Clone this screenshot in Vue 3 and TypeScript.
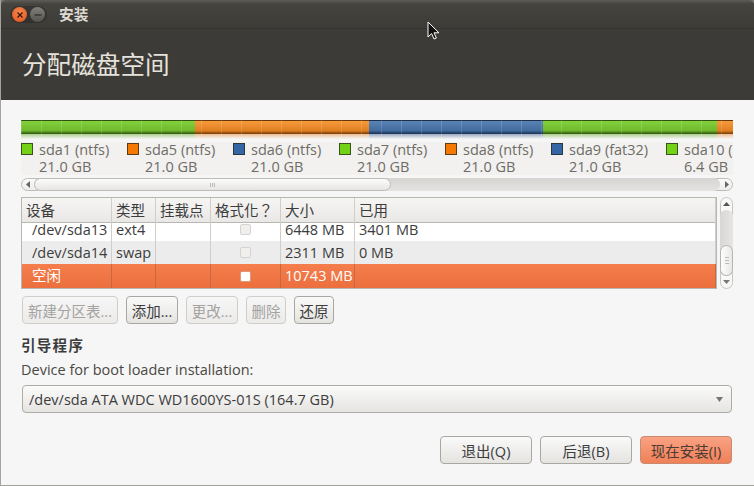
<script setup lang="ts">
const legend = [
  { name: 'sda1 (ntfs)', size: '21.0 GB', c: '#73d216' },
  { name: 'sda5 (ntfs)', size: '21.0 GB', c: '#f57900' },
  { name: 'sda6 (ntfs)', size: '21.0 GB', c: '#3465a4' },
  { name: 'sda7 (ntfs)', size: '21.0 GB', c: '#73d216' },
  { name: 'sda8 (ntfs)', size: '21.0 GB', c: '#f57900' },
  { name: 'sda9 (fat32)', size: '21.0 GB', c: '#3465a4' },
  { name: 'sda10 (ext4)', size: '6.4 GB', c: '#73d216' },
]
const segments = [
  { w: 174, cls: 'green' },
  { w: 174, cls: 'orange' },
  { w: 174, cls: 'blue' },
  { w: 174, cls: 'green' },
  { w: 16, cls: 'orange' },
]
const cols = ['设备', '类型', '挂载点', '格式化？', '大小', '已用']
const rows = [
  { cls: 'r1', dev: '/dev/sda13', type: 'ext4', size: '6448 MB', used: '3401 MB' },
  { cls: 'r2', dev: '/dev/sda14', type: 'swap', size: '2311 MB', used: '0 MB' },
  { cls: 'r3', dev: '空闲', type: '', size: '10743 MB', used: '' },
]
const tools = [
  { t: '新建分区表...', w: 96, off: true },
  { t: '添加...', w: 52, off: false },
  { t: '更改...', w: 52, off: true },
  { t: '删除', w: 40, off: true },
  { t: '还原', w: 40, off: false },
]
</script>

<template>
  <div class="win">
    <div class="titlebar">
      <div class="wbtns">
        <span class="wb close"><svg width="8" height="8" viewBox="0 0 8 8"><path d="M1.5 1.5l5 5M6.5 1.5l-5 5" stroke="#3a1505" stroke-width="1.3" /></svg></span>
        <span class="wb min"><svg width="8" height="8" viewBox="0 0 8 8"><path d="M.5 4h7" stroke="#2f2e2b" stroke-width="1.3" /></svg></span>
      </div>
      <span class="wtitle">安装</span>
    </div>
    <div class="header">分配磁盘空间</div>
    <div class="body">
      <div class="bar">
        <div v-for="(s, i) in segments" :key="i" class="seg" :class="s.cls" :style="{ width: s.w + 'px' }"></div>
      </div>
      <div class="legend">
        <div v-for="l in legend" :key="l.name" class="lg">
          <span class="sw" :style="{ background: l.c }"></span>
          <div class="lgt">
            <div>{{ l.name }}</div>
            <div>{{ l.size }}</div>
          </div>
        </div>
      </div>
      <div class="hscroll">
        <span class="harrow"><svg width="5" height="7" viewBox="0 0 5 7"><path d="M4 0v7L0 3.5z" fill="#666" /></svg></span>
        <div class="htrack">
          <div class="hthumb"><i></i><i></i><i></i></div>
        </div>
        <span class="harrow"><svg width="5" height="7" viewBox="0 0 5 7"><path d="M1 0v7l4-3.5z" fill="#666" /></svg></span>
      </div>
      <div class="tablewrap">
        <div class="table">
          <div class="thead">
            <div v-for="c in cols" :key="c" class="th">{{ c }}</div>
          </div>
          <div v-for="r in rows" :key="r.dev" class="tr" :class="r.cls">
            <div class="td dev">{{ r.dev }}</div>
            <div class="td">{{ r.type }}</div>
            <div class="td"></div>
            <div class="td chk"><span class="cb"></span></div>
            <div class="td">{{ r.size }}</div>
            <div class="td">{{ r.used }}</div>
          </div>
        </div>
        <div class="vscroll">
          <svg class="va" width="7" height="4" viewBox="0 0 7 4"><path d="M0 4h7L3.5 0z" fill="#555" /></svg>
          <div class="vtrack">
            <div class="vthumb"><i></i><i></i><i></i></div>
          </div>
          <svg class="va" width="7" height="4" viewBox="0 0 7 4"><path d="M0 0h7L3.5 4z" fill="#777" /></svg>
        </div>
      </div>
      <div class="tools">
        <button v-for="b in tools" :key="b.t" class="btn" :class="{ off: b.off }" :style="{ width: b.w + 'px' }">{{ b.t }}</button>
      </div>
      <div class="sect">引导程序</div>
      <div class="lbl">Device for boot loader installation:</div>
      <div class="combo">
        <span>/dev/sda ATA WDC WD1600YS-01S (164.7 GB)</span>
        <svg width="7" height="5" viewBox="0 0 7 5"><path d="M0 0h7L3.5 5z" fill="#77756f" /></svg>
      </div>
      <div class="actions">
        <button class="btn act">退出(Q)</button>
        <button class="btn act">后退(B)</button>
        <button class="btn act go">现在安装(I)</button>
      </div>
    </div>
    <svg class="cursor" width="14" height="20" viewBox="0 0 14 20"><path d="M1 1v15l3.6-3.4L7 18l2.4-1-2.4-5.2h5z" fill="#111" stroke="#fff" stroke-width="1" /></svg>
  </div>
</template>

<style>
html, body { margin: 0; padding: 0; background: #f5f5f5; }
</style>

<style scoped>
.win {
  position: relative;
  width: 754px;
  height: 486px;
  box-sizing: border-box;
  overflow: hidden;
  background: linear-gradient(#77756f 0 6px, #f6f6f6 6px);
  border-left: 1px solid #a5a39e;
  border-bottom: 1px solid #a5a39e;
  font-family: "Open Sans", "Noto Sans CJK SC", sans-serif;
  color: #3c3c3c;
  font-size: 14.5px;
}
.titlebar {
  height: 29px;
  box-sizing: border-box;
  display: flex;
  align-items: center;
  background: linear-gradient(#5e5c56, #45443f 4px, #3c3b37);
  border-bottom: 1px solid #35342f;
  border-top-left-radius: 5px;
  border-top-right-radius: 5px;
  padding: 0 0 0 9px;
}
.wbtns {
  display: flex;
  gap: 3px;
  margin-top: 1px;
  padding: 1px 2px;
  border-radius: 9px;
  background: rgba(30, 30, 28, .35);
}
.wb {
  width: 15px;
  height: 15px;
  border-radius: 50%;
  display: flex;
  align-items: center;
  justify-content: center;
}
.close { background: radial-gradient(circle at 50% 35%, #f58a50, #e0501a); }
.min { background: linear-gradient(#82807a, #55534e); }
.wtitle {
  margin-left: 12px;
  color: #dfdbd2;
  font-size: 14.67px;
  font-weight: 700;
  line-height: 29px;
}
.header {
  height: 71px;
  box-sizing: border-box;
  background: #3c3b37;
  color: #e6e3dc;
  font-size: 24.6px;
  line-height: 32px;
  padding: 20px 0 0 21px;
}
.body { padding: 20px 21px 0 20px; }
.bar {
  position: relative;
  display: flex;
  height: 14px;
  width: 712px;
}
.bar::after {
  content: "";
  position: absolute;
  left: 0;
  right: 0;
  top: 0;
  height: 18px;
  background-size: 20px 100%;
  background-image: linear-gradient(90deg, rgba(255, 255, 255, .14) 1px, transparent 1px);
}
.seg {
  position: relative;
  height: 14px;
  box-sizing: border-box;
  border-top: 1px solid rgba(0, 0, 0, .2);
}
.seg::after {
  content: "";
  position: absolute;
  left: 0;
  right: 0;
  top: 13px;
  height: 5px;
}
.green { background: linear-gradient(#84d03c, #6fb92c 75%, #4a7d1c 88%, #2f5a10); }
.green::after { background: linear-gradient(rgba(110, 170, 50, .55), rgba(110, 170, 50, 0)); }
.orange { background: linear-gradient(#f79a3c, #e07f22 75%, #a85a12 88%, #6e3a08); }
.orange::after { background: linear-gradient(rgba(225, 130, 50, .5), rgba(225, 130, 50, 0)); }
.blue { background: linear-gradient(#5a82b5, #426b9e 75%, #2a4a74 88%, #1c3250); }
.blue::after { background: linear-gradient(rgba(60, 90, 140, .5), rgba(60, 90, 140, 0)); }
.legend {
  display: flex;
  width: 712px;
  height: 33px;
  margin-top: 8px;
  overflow-x: clip;
  background: #f2f1f0;
}
.lg { flex: 0 0 106px; display: flex; gap: 6px; }
.lg:nth-child(6) { flex-basis: 115px; }
.sw {
  flex: none;
  width: 10px;
  height: 10px;
  margin-top: 1px;
  border: 1px solid rgba(40, 40, 30, .75);
}
.lgt {
  white-space: nowrap;
  font-size: 14.5px;
  line-height: 16.5px;
  color: #6e6c66;
}
.hscroll {
  display: flex;
  align-items: center;
  width: 712px;
  height: 13px;
  margin-top: 3px;
  box-sizing: border-box;
  border: 1px solid #bdbcb7;
  border-radius: 7px;
  background: linear-gradient(#fbfbfa, #eeedeb);
}
.harrow { flex: none; width: 12px; display: flex; justify-content: center; }
.htrack {
  flex: 1;
  height: 13px;
  margin: -1px 0;
  background: linear-gradient(#d6d5d2, #e4e3e1);
  border-radius: 6px;
}
.hthumb {
  width: 357px;
  height: 13px;
  box-sizing: border-box;
  border: 1px solid #bdbcb7;
  border-radius: 7px;
  background: linear-gradient(#fcfcfc, #e6e5e3);
  display: flex;
  justify-content: center;
  align-items: center;
  gap: 1px;
}
.hthumb i { width: 1px; height: 4px; background: #bbb; }
.tablewrap { display: flex; margin-top: 6px; gap: 3px; }
.table {
  width: 696px;
  height: 92px;
  box-sizing: border-box;
  border: 1px solid #b8b7b2;
  overflow: hidden;
}
.thead, .tr {
  display: grid;
  grid-template-columns: 90px 44px 55px 70px 74px 1fr;
}
.thead {
  height: 25px;
  box-sizing: border-box;
  background: linear-gradient(#f6f5f4, #e9e8e6);
  border-bottom: 1px solid #b8b7b2;
}
.th {
  padding-left: 4px;
  line-height: 25px;
  color: #3c3c3c;
  box-sizing: border-box;
  border-right: 1px solid #cfcec9;
  white-space: nowrap;
}
.th:nth-child(4) { font-family: "Open Sans", "Noto Sans CJK TC", sans-serif; }
.tr { height: 23px; }
.r1 { height: 18px; background: #fff; }
.r1 .td { line-height: 14px; }
.r2 { background: #ececec; }
.r3 { height: 24px; background: linear-gradient(#f47e4c, #ec6f3e); color: #fff; }
.r3 .td { line-height: 24px; }
.td {
  box-sizing: border-box;
  padding-left: 4px;
  border-right: 1px solid #cfcec9;
  line-height: 23px;
  white-space: nowrap;
}
.r3 .td { border-right-color: #c9673f; }
.dev { padding-left: 10px; }
.chk { display: flex; align-items: center; justify-content: center; padding-left: 0; }
.cb {
  width: 9px;
  height: 9px;
  border: 1px solid #d4d3cf;
  border-radius: 2px;
  background: #f0efed;
}
.r1 .chk { align-items: flex-start; padding-top: 1px; }
.r3 .cb { background: #fff; border-color: #dc9a7c; }
.vscroll {
  width: 13px;
  height: 92px;
  box-sizing: border-box;
  border: 1px solid #c6c5c0;
  border-radius: 7px;
  background: #f8f8f7;
  display: flex;
  flex-direction: column;
  align-items: center;
  padding: 4px 0;
}
.va { flex: none; }
.vtrack {
  flex: 1;
  width: 13px;
  margin: 4px -1px;
  background: linear-gradient(90deg, #d8d7d4, #e6e5e3);
  display: flex;
  flex-direction: column;
  justify-content: flex-end;
  border-radius: 6px;
}
.vthumb {
  height: 31px;
  box-sizing: border-box;
  border: 1px solid #b5b4af;
  border-radius: 7px;
  background: linear-gradient(90deg, #fdfdfc, #e9e8e6);
  display: flex;
  flex-direction: column;
  align-items: center;
  justify-content: center;
  gap: 2px;
}
.vthumb i { width: 4px; height: 1px; background: #bbb; }
.tools { display: flex; gap: 8px; margin: 7px 0 0 1px; }
.btn {
  display: block;
  height: 28px;
  box-sizing: border-box;
  padding: 0;
  border: 1px solid #a9a7a2;
  border-radius: 4px;
  background: linear-gradient(#fafafa, #e4e3e0);
  font-family: inherit;
  font-size: 14.5px;
  color: #3c3c3c;
  white-space: nowrap;
}
.btn.off {
  color: #a3a2a0;
  border-color: #cfcec9;
  background: linear-gradient(#f6f6f6, #ecebe9);
}
.sect {
  margin-top: 14px;
  font-weight: 700;
  line-height: 16px;
  letter-spacing: 1.3px;
}
.lbl { margin-top: 7px; line-height: 18px; color: #4a4843; }
.combo {
  margin: 6px 0 0 1px;
  width: 710px;
  height: 28px;
  box-sizing: border-box;
  border: 1px solid #aeaca7;
  border-radius: 4px;
  background: linear-gradient(#fbfbfb, #e5e4e1);
  display: flex;
  align-items: center;
  justify-content: space-between;
  padding: 0 8px 0 6px;
}
.actions { display: flex; justify-content: flex-end; gap: 8px; margin: 23px 1px 0 0; }
.act { width: 92px; }
.go {
  background: linear-gradient(#f9a283, #ef8058);
  border-color: #c98a70;
  color: #4d3a32;
}
.cursor { position: absolute; left: 426px; top: 21px; }
</style>
